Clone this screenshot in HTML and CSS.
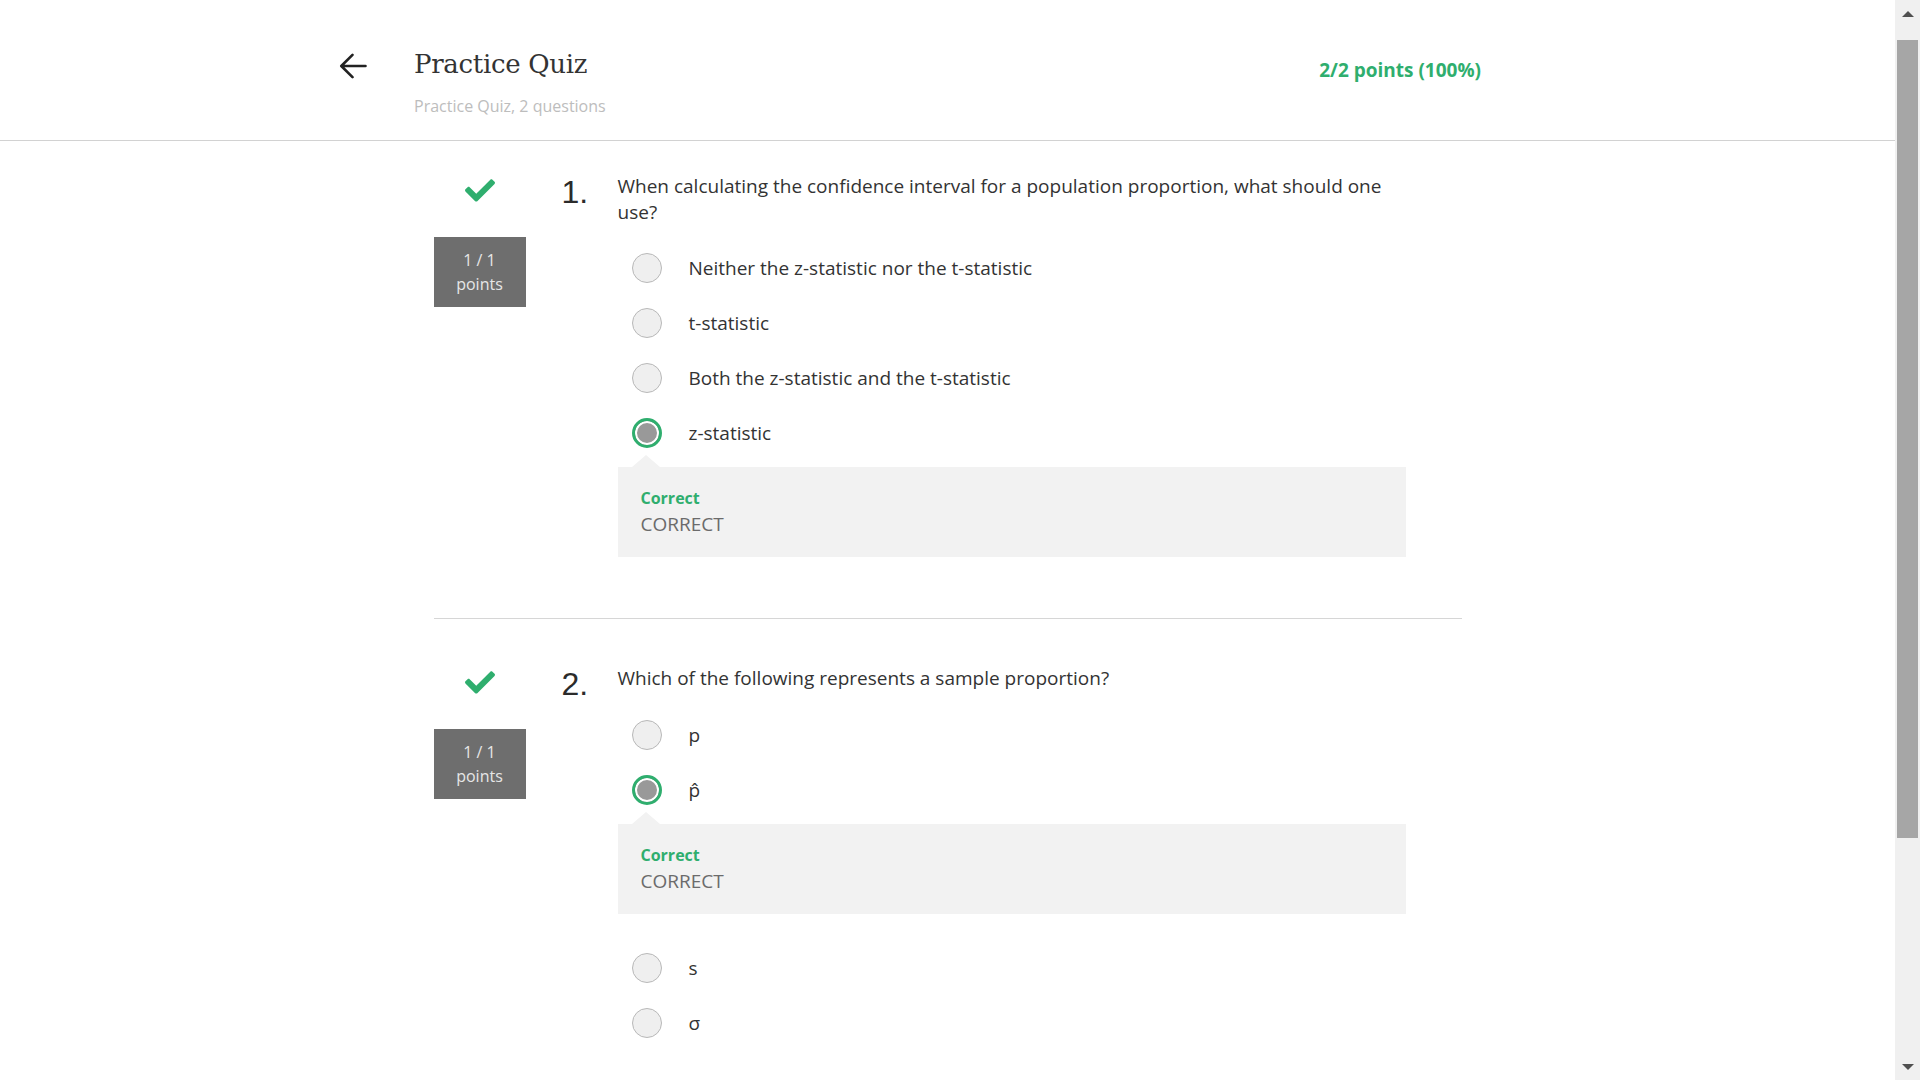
FILE: index.html
```html
<!DOCTYPE html>
<html lang="en">
<head>
<meta charset="utf-8">
<title>Practice Quiz</title>
<link rel="stylesheet" href="styles.css">
</head>
<body>
<div class="app">
  <div class="page">
    <header class="header">
      <div class="header-inner">
        <div class="back">
          <svg width="28" height="26" viewBox="0 0 28 26" aria-hidden="true">
            <path d="M26.5 13H2.5M13.5 1.8L2.3 13L13.5 24.2" fill="none" stroke="#222" stroke-width="2.6" stroke-linecap="round" stroke-linejoin="round"/>
          </svg>
        </div>
        <div class="title-block">
          <h1 class="title">Practice Quiz</h1>
          <div class="subtitle">Practice Quiz, 2 questions</div>
        </div>
        <div class="score">2/2 points (100%)</div>
      </div>
    </header>

    <main class="quiz">
      <section class="question first">
        <div class="q-side">
          <svg class="check" width="30" height="23" viewBox="0 70 512 375" aria-hidden="true">
            <path fill="#2fae6e" d="M173.898 439.404l-166.4-166.4c-9.997-9.997-9.997-26.206 0-36.204l36.203-36.204c9.997-9.998 26.207-9.998 36.204 0L192 312.69 432.095 72.596c9.997-9.997 26.207-9.997 36.204 0l36.203 36.204c9.997 9.997 9.997 26.206 0 36.204l-294.4 294.401c-9.998 9.997-26.207 9.997-36.204-.001z"/>
          </svg>
          <div class="pts"><div>1 / 1</div><div>points</div></div>
        </div>
        <div class="q-num">1.</div>
        <div class="q-body">
          <p class="q-text">When calculating the confidence interval for a population proportion, what should one use?</p>
          <div class="options">
            <div class="opt"><span class="radio"></span><span class="opt-label">Neither the z-statistic nor the t-statistic</span></div>
            <div class="opt"><span class="radio"></span><span class="opt-label">t-statistic</span></div>
            <div class="opt"><span class="radio"></span><span class="opt-label">Both the z-statistic and the t-statistic</span></div>
            <div class="opt"><span class="radio selected"></span><span class="opt-label">z-statistic</span></div>
          </div>
          <div class="feedback">
            <div class="fb-title">Correct</div>
            <div class="fb-text">CORRECT</div>
          </div>
        </div>
      </section>

      <hr class="sep">

      <section class="question second">
        <div class="q-side">
          <svg class="check" width="30" height="23" viewBox="0 70 512 375" aria-hidden="true">
            <path fill="#2fae6e" d="M173.898 439.404l-166.4-166.4c-9.997-9.997-9.997-26.206 0-36.204l36.203-36.204c9.997-9.998 26.207-9.998 36.204 0L192 312.69 432.095 72.596c9.997-9.997 26.207-9.997 36.204 0l36.203 36.204c9.997 9.997 9.997 26.206 0 36.204l-294.4 294.401c-9.998 9.997-26.207 9.997-36.204-.001z"/>
          </svg>
          <div class="pts"><div>1 / 1</div><div>points</div></div>
        </div>
        <div class="q-num">2.</div>
        <div class="q-body">
          <p class="q-text">Which of the following represents a sample proportion?</p>
          <div class="options">
            <div class="opt"><span class="radio"></span><span class="opt-label">p</span></div>
            <div class="opt"><span class="radio selected"></span><span class="opt-label">p&#x302;</span></div>
          </div>
          <div class="feedback">
            <div class="fb-title">Correct</div>
            <div class="fb-text">CORRECT</div>
          </div>
          <div class="options">
            <div class="opt"><span class="radio"></span><span class="opt-label">s</span></div>
            <div class="opt"><span class="radio"></span><span class="opt-label">σ</span></div>
          </div>
        </div>
      </section>
    </main>
  </div>

  <div class="scrollbar" aria-hidden="true">
    <div class="sb-btn"><span class="tri-up"></span></div>
    <div class="sb-thumb"></div>
    <div class="sb-fill"></div>
    <div class="sb-btn"><span class="tri-down"></span></div>
  </div>
</div>
</body>
</html>
```

FILE: styles.css
```css
html, body {
  margin: 0;
  padding: 0;
  height: 1080px;
  overflow: hidden;
  background: #fff;
  font-family: "Open Sans", "Noto Sans", sans-serif;
  color: #333;
}

.app {
  display: flex;
  height: 1080px;
}

.page {
  flex: 1;
  min-width: 0;
  overflow: hidden;
}

/* Header */
.header {
  height: 140px;
  border-bottom: 1px solid #d2d2d2;
}

.header-inner {
  width: 1142px;
  margin-left: 339px;
  display: flex;
  align-items: flex-start;
}

.back {
  width: 75px;
  padding-top: 53px;
  line-height: 0;
}

.title-block {
  flex: 1;
  padding-top: 48px;
}

.title {
  margin: 0;
  font-family: "DejaVu Serif", "Liberation Serif", serif;
  font-weight: normal;
  font-size: 26px;
  line-height: 32px;
  letter-spacing: -0.3px;
  color: #333;
}

.subtitle {
  margin-top: 14px;
  font-size: 16px;
  line-height: 24px;
  color: #bdbdbd;
}

.score {
  padding-top: 57px;
  font-size: 19px;
  line-height: 26px;
  font-weight: bold;
  color: #2fae6e;
}

/* Quiz */
.quiz {
  width: 1028px;
  margin: 0 auto;
}

.question {
  display: flex;
  align-items: flex-start;
}

.question.first {
  padding-top: 32px;
  padding-bottom: 61px;
}

.question.second {
  padding-top: 46px;
}

.q-side {
  width: 92px;
  display: flex;
  flex-direction: column;
  align-items: center;
}

.check {
  display: block;
  margin-top: 6px;
}

.pts {
  margin-top: 35px;
  width: 92px;
  padding: 11px 0;
  background: #6e6e6e;
  color: #e6e6e6;
  font-size: 16px;
  line-height: 24px;
  text-align: center;
}

.q-num {
  margin-left: 36px;
  width: 56px;
  margin-top: 3px;
  font-family: "Liberation Sans", Arial, sans-serif;
  font-size: 32px;
  line-height: 32px;
  color: #2b2b2b;
}

.q-body {
  width: 788px;
}

.q-text {
  margin: 0;
  font-size: 19px;
  line-height: 26px;
  color: #333;
}

.options {
  margin-top: 15px;
}

.second .options {
  margin-top: 16px;
}

.opt {
  height: 55px;
  display: flex;
  align-items: center;
  padding-left: 14px;
}

.radio {
  box-sizing: border-box;
  width: 30px;
  height: 30px;
  border-radius: 50%;
  border: 1px solid #b8b8b8;
  background: #efefef;
  flex: none;
}

.radio.selected {
  border: 3px solid #2fae6e;
  background: #999;
  box-shadow: inset 0 0 0 2px #fff;
}

.opt-label {
  margin-left: 27px;
  font-size: 19px;
  line-height: 26px;
  color: #333;
}

.feedback {
  position: relative;
  margin-top: 7px;
  padding: 20px 22px 20px 23px;
  background: #f2f2f2;
}

.feedback::before {
  content: "";
  position: absolute;
  top: -12px;
  left: 14px;
  border-left: 14px solid transparent;
  border-right: 14px solid transparent;
  border-bottom: 12px solid #f2f2f2;
}

.second .feedback {
  margin-bottom: 26px;
}

.second .feedback + .options {
  margin-top: 0;
}

.fb-title {
  font-size: 16px;
  line-height: 22px;
  font-weight: bold;
  color: #2fae6e;
}

.fb-text {
  margin-top: 2px;
  font-size: 19px;
  line-height: 26px;
  color: #6b6b6b;
}

.sep {
  margin: 0;
  border: 0;
  height: 1px;
  background: #d6d6d6;
}

/* Scrollbar */
.scrollbar {
  width: 25px;
  flex: none;
  background: #f0f0f0;
  display: flex;
  flex-direction: column;
  align-items: center;
}

.sb-btn {
  height: 27px;
  width: 25px;
  display: flex;
  align-items: center;
  justify-content: center;
}

.tri-up {
  width: 0;
  height: 0;
  border-left: 6px solid transparent;
  border-right: 6px solid transparent;
  border-bottom: 6px solid #505050;
}

.tri-down {
  width: 0;
  height: 0;
  border-left: 6px solid transparent;
  border-right: 6px solid transparent;
  border-top: 6px solid #505050;
}

.sb-thumb {
  margin-top: 13px;
  width: 21px;
  height: 798px;
  background: #a6a6a6;
}

.sb-fill {
  flex: 1;
}
```
